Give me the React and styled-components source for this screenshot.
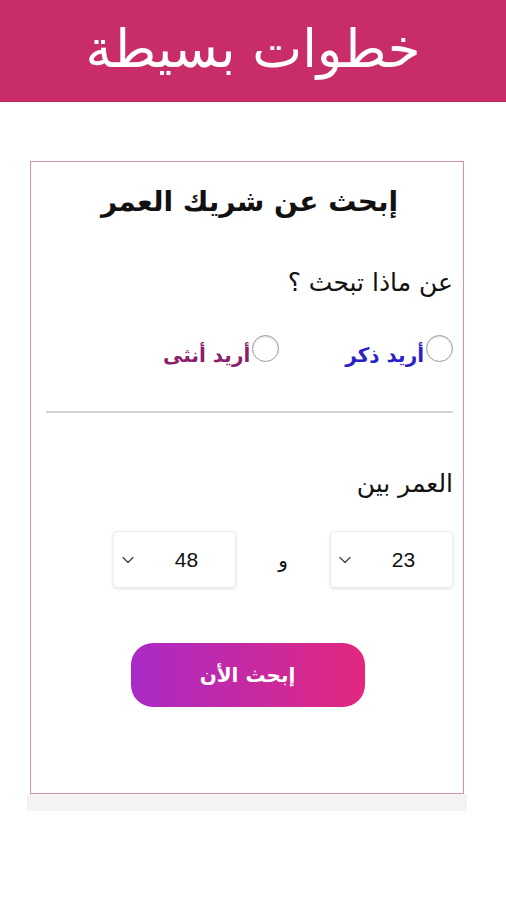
import React from 'react'
import styled, { createGlobalStyle } from 'styled-components'
import { ChevronDown } from 'lucide-react'

const Global = createGlobalStyle`
  body {
    margin: 0;
    background: #ffffff;
    font-family: "DejaVu Sans", "Liberation Sans", sans-serif;
  }
`

const Header = styled.header`
  height: 101px;
  background: #c92d69;
  border-bottom: 1px solid #b8205a;
  display: flex;
  align-items: center;
  justify-content: center;
`

const HeaderTitle = styled.h1`
  margin: 0 0 4px 0;
  color: #ffffff;
  font-size: 53px;
  font-weight: 400;
  direction: rtl;
`

const Page = styled.main`
  padding: 59px 0 0 27px;
  width: 440px;
`

const Card = styled.section`
  margin: 0 3px;
  height: 631px;
  border: 1px solid #d98ea9;
  background: #fff;
  direction: rtl;
  padding: 0 10px 0 15px;
  display: flex;
  flex-direction: column;
`

const ShadowStrip = styled.div`
  height: 17px;
  background: #f3f3f3;
`

const Title = styled.h2`
  margin: 23px 0 0 0;
  text-align: center;
  font-size: 28px;
  font-weight: 700;
  color: #111;
`

const Label = styled.p`
  margin: ${p => p.$top}px 0 0 0;
  font-size: 25px;
  color: #111;
`

const RadioRow = styled.div`
  display: flex;
  gap: 66px;
  margin-top: 38px;
`

const RadioItem = styled.label`
  display: flex;
  align-items: flex-start;
  gap: 2px;
  font-size: 20px;
  font-weight: 700;
  color: ${p => p.$color};
`

const Circle = styled.span`
  width: 25px;
  height: 25px;
  border-radius: 50%;
  border: 1px solid #9a9a9a;
  background: #fff;
  box-shadow: inset 0 1px 2px rgba(0,0,0,0.15);
  flex-shrink: 0;
`

const RadioText = styled.span`
  margin-top: 8px;
`

const Divider = styled.hr`
  margin: 44px 0 0 0;
  border: none;
  border-top: 2px solid #d4d4d4;
`

const SelectRow = styled.div`
  display: flex;
  align-items: center;
  margin-top: 33px;
`

const Picker = styled.div`
  width: 123px;
  height: 57px;
  box-sizing: border-box;
  border: 1px solid #ececec;
  border-radius: 4px;
  box-shadow: 0 1px 3px rgba(0,0,0,0.12);
  display: flex;
  align-items: center;
  padding: 0 0 0 4px;
  font-family: "Liberation Sans", Arial, sans-serif;
  font-size: 21px;
  color: #111;
`

const PickerValue = styled.span`
  flex: 1;
  text-align: center;
`

const And = styled.span`
  width: 94px;
  text-align: center;
  font-size: 20px;
  color: #111;
`

const ButtonRow = styled.div`
  display: flex;
  justify-content: center;
  margin-top: 55px;
  padding-right: 4px;
`

const SearchButton = styled.button`
  width: 234px;
  height: 64px;
  border: none;
  border-radius: 22px;
  background: linear-gradient(to left, #e2287e, #a92ac6);
  color: #fff;
  font-family: "DejaVu Sans", sans-serif;
  font-size: 20px;
  font-weight: 700;
`

const Select = ({ value }) => (
  <Picker>
    <PickerValue>{value}</PickerValue>
    <ChevronDown size={20} strokeWidth={1.5} color="#444" />
  </Picker>
)

export default function App() {
  return (
    <>
      <Global />
      <Header>
        <HeaderTitle>خطوات بسيطة</HeaderTitle>
      </Header>
      <Page>
        <Card>
          <Title>إبحث عن شريك العمر</Title>
          <Label $top={50}>عن ماذا تبحث ؟</Label>
          <RadioRow>
            <RadioItem $color="#2b21c6">
              <Circle />
              <RadioText>أريد ذكر</RadioText>
            </RadioItem>
            <RadioItem $color="#8c1f6c">
              <Circle />
              <RadioText>أريد أنثى</RadioText>
            </RadioItem>
          </RadioRow>
          <Divider />
          <Label $top={56}>العمر بين</Label>
          <SelectRow>
            <Select value="23" />
            <And>و</And>
            <Select value="48" />
          </SelectRow>
          <ButtonRow>
            <SearchButton>إبحث الأن</SearchButton>
          </ButtonRow>
        </Card>
        <ShadowStrip />
      </Page>
    </>
  )
}
